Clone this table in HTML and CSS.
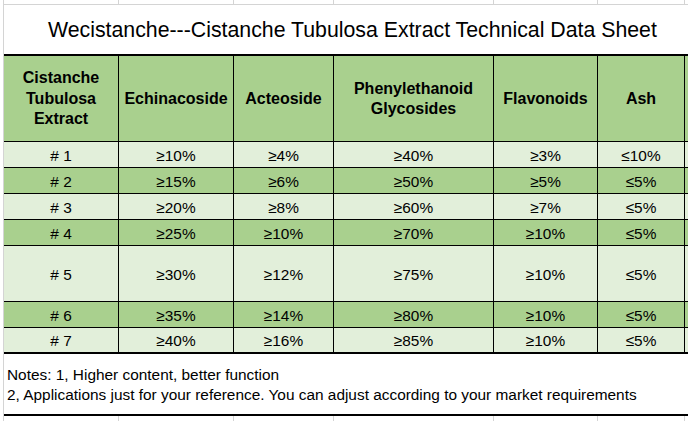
FILE: index.html
```html
<!DOCTYPE html>
<html>
<head>
<meta charset="utf-8">
<link rel="stylesheet" href="styles.css">
</head>
<body>
<div class="sheet">
  <div class="strip top">
    <span></span><span></span><span></span><span></span><span></span><span></span><span class="last"></span>
  </div>
  <div class="title">Wecistanche---Cistanche Tubulosa Extract Technical Data Sheet</div>
  <div class="grid">
    <div class="c hd">Cistanche<br>Tubulosa<br>Extract</div>
    <div class="c hd">Echinacoside</div>
    <div class="c hd">Acteoside</div>
    <div class="c hd">Phenylethanoid<br>Glycosides</div>
    <div class="c hd">Flavonoids</div>
    <div class="c hd">Ash</div>
    <div class="c hd e"></div>

    <div class="c lt"># 1</div><div class="c lt">≥10%</div><div class="c lt">≥4%</div><div class="c lt">≥40%</div><div class="c lt">≥3%</div><div class="c lt">≤10%</div><div class="c lt e"></div>
    <div class="c gr"># 2</div><div class="c gr">≥15%</div><div class="c gr">≥6%</div><div class="c gr">≥50%</div><div class="c gr">≥5%</div><div class="c gr">≤5%</div><div class="c gr e"></div>
    <div class="c lt"># 3</div><div class="c lt">≥20%</div><div class="c lt">≥8%</div><div class="c lt">≥60%</div><div class="c lt">≥7%</div><div class="c lt">≤5%</div><div class="c lt e"></div>
    <div class="c gr"># 4</div><div class="c gr">≥25%</div><div class="c gr">≥10%</div><div class="c gr">≥70%</div><div class="c gr">≥10%</div><div class="c gr">≤5%</div><div class="c gr e"></div>
    <div class="c lt"># 5</div><div class="c lt">≥30%</div><div class="c lt">≥12%</div><div class="c lt">≥75%</div><div class="c lt">≥10%</div><div class="c lt">≤5%</div><div class="c lt e"></div>
    <div class="c gr"># 6</div><div class="c gr">≥35%</div><div class="c gr">≥14%</div><div class="c gr">≥80%</div><div class="c gr">≥10%</div><div class="c gr">≤5%</div><div class="c gr e"></div>
    <div class="c lt lastrow"># 7</div><div class="c lt lastrow">≥40%</div><div class="c lt lastrow">≥16%</div><div class="c lt lastrow">≥85%</div><div class="c lt lastrow">≥10%</div><div class="c lt lastrow">≤5%</div><div class="c lt e lastrow"></div>
  </div>
  <div class="notes">
    <div>Notes: 1, Higher content, better function</div>
    <div>2, Applications just for your reference. You can adjust according to your market requirements</div>
  </div>
  <div class="strip bottom">
    <span></span><span></span><span></span><span></span><span></span><span></span><span class="last"></span>
  </div>
</div>
</body>
</html>
```

FILE: styles.css
```css
html, body {
  margin: 0;
  padding: 0;
  background: #ffffff;
  width: 688px;
  height: 421px;
  overflow: hidden;
}

.sheet {
  margin-left: 3px;
  border-left: 1px solid #d4d4d4;
  font-family: "Liberation Sans", Arial, sans-serif;
  color: #000;
}

.strip {
  display: grid;
  grid-template-columns: 115px 115px 100px 160px 104px 87px 1fr;
  background: #fff;
}

.strip span {
  border-right: 1px solid #d4d4d4;
}

.strip span.last {
  border-right: none;
}

.strip.top {
  height: 4px;
  border-bottom: 1px solid #d4d4d4;
}

.strip.bottom {
  height: 6px;
}

.title {
  box-sizing: border-box;
  height: 51px;
  border-bottom: 2px solid #000;
  font-size: 21.3px;
  line-height: 51px;
  padding-left: 44px;
  white-space: nowrap;
}

.grid {
  display: grid;
  grid-template-columns: 115px 115px 100px 160px 104px 87px 1fr;
  grid-template-rows: 86px 26px 26px 26px 26px 56px 26px 26px;
}

.c {
  box-sizing: border-box;
  border-right: 1px solid #000;
  border-bottom: 1px solid #000;
  display: flex;
  align-items: center;
  justify-content: center;
  text-align: center;
  font-size: 15.4px;
  padding-top: 2px;
  white-space: nowrap;
}

.c.e {
  border-right: none;
}

.c.hd {
  background: #a9d08e;
  font-weight: bold;
  font-size: 16px;
  line-height: 20.5px;
  padding-top: 1px;
}

.c.lt {
  background: #e2efda;
}

.c.gr {
  background: #a9d08e;
}

.c.lastrow {
  border-bottom: 2px solid #000;
}

.notes {
  height: 62px;
  box-sizing: border-box;
  border-bottom: 2px solid #000;
  padding: 11px 0 0 3px;
  font-size: 15.4px;
  line-height: 20px;
  white-space: nowrap;
}
```
